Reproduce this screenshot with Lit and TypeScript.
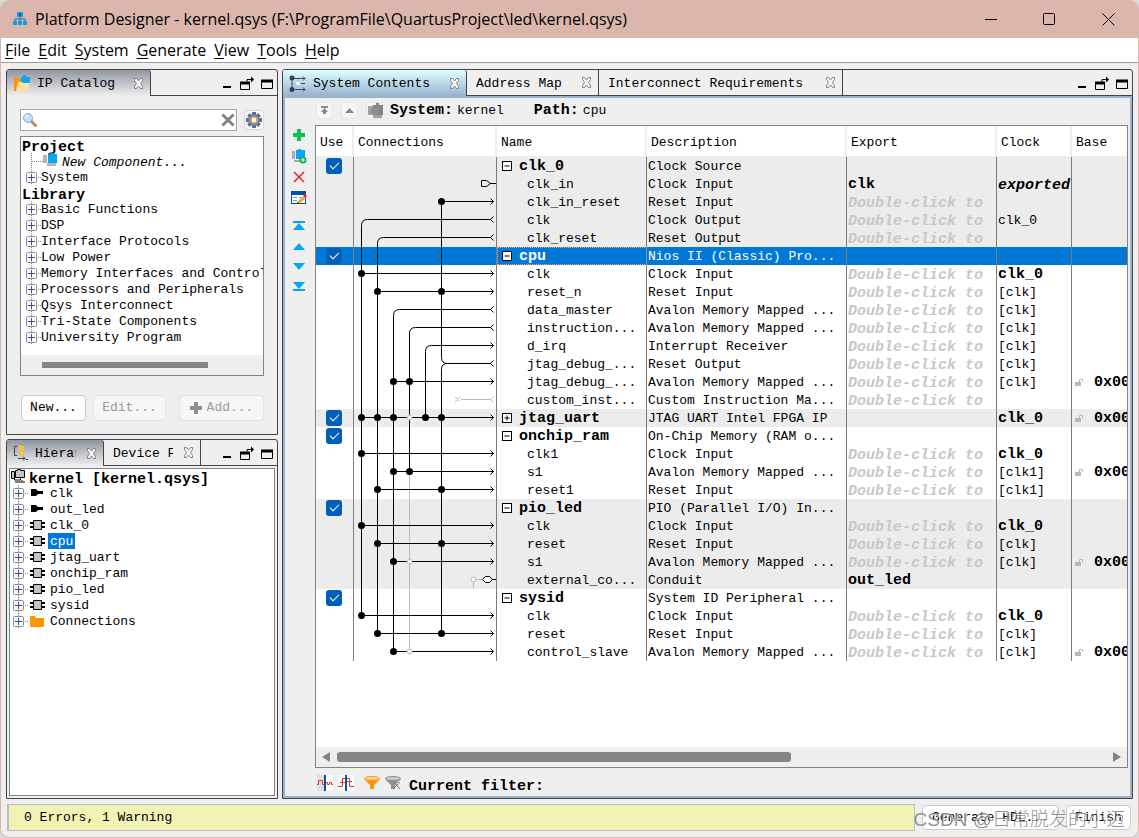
import { LitElement, html, svg, css, nothing, TemplateResult } from "lit";
import { customElement, state } from "lit/decorators.js";
import { classMap } from "lit/directives/class-map.js";

interface Row {
  name: string;
  desc: string;
  group?: "open" | "closed";
  exp?: string;
  clock?: string;
  clockStyle?: "bold" | "exported";
  base?: boolean;
  band?: boolean;
}

const HINT = "Double-click to";

const ROWS: Row[] = [
  { name: "clk_0", desc: "Clock Source", group: "open", band: true },
  { name: "clk_in", desc: "Clock Input", exp: "clk", clock: "exported", clockStyle: "exported", band: true },
  { name: "clk_in_reset", desc: "Reset Input", exp: HINT, band: true },
  { name: "clk", desc: "Clock Output", exp: HINT, clock: "clk_0", band: true },
  { name: "clk_reset", desc: "Reset Output", exp: HINT, band: true },
  { name: "cpu", desc: "Nios II (Classic) Pro...", group: "open" },
  { name: "clk", desc: "Clock Input", exp: HINT, clock: "clk_0", clockStyle: "bold" },
  { name: "reset_n", desc: "Reset Input", exp: HINT, clock: "[clk]" },
  { name: "data_master", desc: "Avalon Memory Mapped ...", exp: HINT, clock: "[clk]" },
  { name: "instruction...", desc: "Avalon Memory Mapped ...", exp: HINT, clock: "[clk]" },
  { name: "d_irq", desc: "Interrupt Receiver", exp: HINT, clock: "[clk]" },
  { name: "jtag_debug_...", desc: "Reset Output", exp: HINT, clock: "[clk]" },
  { name: "jtag_debug_...", desc: "Avalon Memory Mapped ...", exp: HINT, clock: "[clk]", base: true },
  { name: "custom_inst...", desc: "Custom Instruction Ma...", exp: HINT },
  { name: "jtag_uart", desc: "JTAG UART Intel FPGA IP", group: "closed", clock: "clk_0", clockStyle: "bold", base: true, band: true },
  { name: "onchip_ram", desc: "On-Chip Memory (RAM o...", group: "open" },
  { name: "clk1", desc: "Clock Input", exp: HINT, clock: "clk_0", clockStyle: "bold" },
  { name: "s1", desc: "Avalon Memory Mapped ...", exp: HINT, clock: "[clk1]", base: true },
  { name: "reset1", desc: "Reset Input", exp: HINT, clock: "[clk1]" },
  { name: "pio_led", desc: "PIO (Parallel I/O) In...", group: "open", band: true },
  { name: "clk", desc: "Clock Input", exp: HINT, clock: "clk_0", clockStyle: "bold", band: true },
  { name: "reset", desc: "Reset Input", exp: HINT, clock: "[clk]", band: true },
  { name: "s1", desc: "Avalon Memory Mapped ...", exp: HINT, clock: "[clk]", base: true, band: true },
  { name: "external_co...", desc: "Conduit", exp: "out_led", band: true },
  { name: "sysid", desc: "System ID Peripheral ...", group: "open" },
  { name: "clk", desc: "Clock Input", exp: HINT, clock: "clk_0", clockStyle: "bold" },
  { name: "reset", desc: "Reset Input", exp: HINT, clock: "[clk]" },
  { name: "control_slave", desc: "Avalon Memory Mapped ...", exp: HINT, clock: "[clk]", base: true },
];

const ROW_H = 18;
const track = (n: number) => 7.5 + 16 * n;
const mid = (r: number) => r * ROW_H + 8.5;

/* sources leave a bend on their track, then run down to the last sink */
const BENDS: [row: number, track: number, last: number, out: boolean][] = [
  [3, 0, 25, true],
  [4, 1, 26, true],
  [8, 2, 27, true],
  [9, 3, 17, true],
  [10, 4, 14, false],
  [11, 5, 26, true],
];

const SINKS: [row: number, dots: number[], open?: number][] = [
  [2, [5]],
  [6, [0]],
  [7, [1, 5]],
  [12, [2, 3]],
  [14, [0, 1, 2, 4, 5], 3],
  [16, [0]],
  [17, [2, 3]],
  [18, [1, 5]],
  [20, [0]],
  [21, [1, 5]],
  [22, [2], 3],
  [25, [0]],
  [26, [1, 5]],
  [27, [2], 3],
];

const icon = (w: number, h: number, body: TemplateResult) =>
  html`<svg width=${w} height=${h} viewBox="0 0 ${w} ${h}" aria-hidden="true">${body}</svg>`;

const closeIcon = icon(11, 11, svg`<path d="M1.500.5h2l2 2.500 2-2.500h2v2L7.500 5.500l2 3v2h-2l-2-2.500-2 2.500h-2v-2l2-3-2-3z" fill="#f6f6f6" stroke="#808080" stroke-width="1"/>`);
const catalogIcon = icon(18, 17, svg`<path d="M1 3h6l1 2v11H1z" fill="#ff9500"/><path d="M8 2h2V0h3v2h4v8H8z" fill="#0aa5f5"/><path d="M3 16l2-9h4l1 1h7l-2 8z" fill="#ffe2a0"/>`);
const systemIcon = icon(18, 17, svg`<path d="M3 3v12M3 3.500h13M6 14.500h10M10 8.500h6" stroke="#33465c" fill="none"/><path d="M14 1.500l2 2-2 2M14 12.500l2 2-2 2" stroke="#33465c" fill="none"/><circle cx="3" cy="3" r="2.500" fill="#2d4259"/><circle cx="3" cy="14.500" r="2.500" fill="#2d4259"/><path d="M9 4v9M5 8.500h4" stroke="#8fa9c4"/><circle cx="9" cy="8.500" r="2.500" fill="#fff" stroke="#b5c8dc"/>`);
const hierIcon = icon(16, 16, svg`<path d="M4 1.500H1.500v9H4" stroke="#33465c" fill="none"/><path d="M6 0h2l1 1h2v4H6zM6 6h2l1 1h2v4H6z" fill="#f7c531"/><path d="M5 13.500h7M10 11.500l2 2-2 2M13 14.500h2" stroke="#33465c" fill="none"/>`);
const chips = (dark: string, c1: string, c2: string) =>
  icon(15, 14, svg`<path d="M0 2h4v8H0zM4 10h9v3H4z" fill=${c1}/><path d="M5 1h2V0h3v1h4v9H5z" fill=${c2}/><path d="M5 1h2V0" stroke=${dark} fill="none"/>`);
const drillIcon = icon(17, 16, svg`<path d="M1 3h5v9H1zM6 12h9v3H6z" fill="#a2a2a2"/><path d="M6 2h3V0h3v2h4v10H6z" fill="#858585"/><circle cx="8" cy="8" r="4" fill="#8e8e8e"/>`);
const kernelIcon = icon(15, 14, svg`<path d="M.5 2.500h3v7h-3zM4.500 1.500h2v-1h3v1h4v7h-9z" fill="#c4c4c4" stroke="#000"/><path d="M3.500 9v2h6V9M4 13h10M11 11v1.500" stroke="#000" fill="none"/>`);
const plugIcon = icon(15, 10, svg`<path d="M1 1h5l2 2h5v3H8L6 8H1z" fill="#000"/>`);
const chipIcon = icon(15, 10, svg`<path d="M0 3h15M0 7h15" stroke="#000" stroke-width="2"/><path d="M3.500.5h8v9h-8z" fill="#c4c4c4" stroke="#000"/>`);
const folderIcon = icon(15, 12, svg`<path d="M0 1h5l1 2h8v9H0z" fill="#ff9500"/>`);
const plusBox = html`<svg class="pm" width="11" height="11" viewBox="0 0 11 11" aria-hidden="true"><rect x=".5" y=".5" width="10" height="10" rx="1" fill="#f7f7f7" stroke="#8f8f8f"/><path d="M2 5.500h7M5.500 2v7" stroke="#3b4f91"/></svg>`;
const lockIcon = icon(9, 9, svg`<path d="M0 4h6v4H0z" fill="#b9b9b9"/><path d="M4.500 4V1.500h3V4" stroke="#b9b9b9" fill="none"/>`);

const minIcon = icon(16, 16, svg`<path d="M4 11h8" stroke="#000" stroke-width="2"/>`);
const restoreIcon = icon(16, 16, svg`<path d="M1 7h10" stroke="#000" stroke-width="3"/><path d="M1.500 6v7.500h9V7" fill="none" stroke="#000"/><path d="M8 5.500V3.500h5" fill="none" stroke="#000"/><path d="M12 .5l3 3-3 3z"/>`);
const maxIcon = icon(16, 16, svg`<path d="M2 5h12" stroke="#000" stroke-width="3"/><path d="M2.500 5v7.500h11V5" fill="none" stroke="#000"/>`);

@customElement("app-root")
export class AppRoot extends LitElement {
  @state() private selected = 5;

  static styles = css`
    :host {
      display: block;
      height: 100vh;
      background: #dcdad8;
      font: 13px/16px "Liberation Mono", "Noto Sans CJK SC", monospace;
      color: #000;
    }
    * { box-sizing: border-box; }
    svg { display: block; flex: none; }
    button { font: inherit; color: inherit; background: none; border: 0; padding: 0; margin: 0; }
    ul { list-style: none; margin: 0; padding: 0; }
    .window {
      position: relative;
      height: 100%;
      display: flex;
      flex-direction: column;
      background: #efefef;
      border: 1px solid #dbb6ac;
      border-top: 0;
      border-radius: 9px;
      overflow: hidden;
    }
    .title {
      display: flex;
      align-items: center;
      flex: none;
      height: 38px;
      background: #dbb6ac;
      padding-left: 12px;
      font: 16px/22px "Open Sans", "Noto Sans", sans-serif;
    }
    .title h1 { font: inherit; margin: 0; padding-left: 8px; flex: 1; white-space: nowrap; overflow: hidden; }
    .title button { width: 58px; height: 38px; display: grid; place-items: center; }
    .title button:last-child { width: 60px; }
    .menu {
      display: flex;
      gap: 8px;
      flex: none;
      height: 25px;
      padding-left: 4px;
      background: #fff;
      border-bottom: 1px solid #a0a0a0;
      font: 16px/24px "Open Sans", "Noto Sans", sans-serif;
    }
    .menu u { text-underline-offset: 2px; }
    .body {
      flex: 1;
      min-height: 0;
      display: grid;
      grid-template-columns: 272px minmax(0, 1fr);
      grid-template-rows: minmax(0, 366fr) minmax(0, 360fr);
      gap: 4px;
      padding: 6px 5px 5px;
    }
    .panel {
      display: flex;
      flex-direction: column;
      min-height: 0;
      border: 1px solid #444;
      border-radius: 3px 3px 0 0;
      overflow: hidden;
    }
    .main { grid-column: 2; grid-row: 1 / 3; }
    .strip { display: flex; flex: none; height: 26px; }
    .tab {
      display: flex;
      align-items: center;
      justify-content: space-between;
      gap: 6px;
      border-right: 1px solid #444;
      border-bottom: 1px solid #444;
      padding: 0 6px 0 9px;
      white-space: nowrap;
    }
    .tab .label { flex: 1; margin-right: 4px; padding-top: 2px; text-align: left; overflow: hidden; }
    .tab.on { border-bottom: 0; padding-left: 6px; border-top-right-radius: 3px; background: linear-gradient(#9095a0, #efefef); }
    .main .tab.on { background: linear-gradient(#dcffff, #9ab3cf); }
    .w-cat { width: 144px; }
    .w-hier { width: 97px; }
    .w-dev { width: 97px; }
    .w-sys { width: 184px; }
    .w-addr { width: 132px; }
    .w-req { width: 244px; }
    .tools {
      flex: 1;
      display: flex;
      justify-content: flex-end;
      align-items: center;
      gap: 4px;
      padding: 3px 2px 0 0;
      border-bottom: 1px solid #444;
    }
    .catalog { flex: 1; min-height: 0; display: flex; flex-direction: column; padding: 13px 13px; }
    .search { display: flex; align-items: center; gap: 7px; }
    .field {
      flex: 1;
      display: flex;
      align-items: center;
      height: 22px;
      padding: 0 1px;
      background: #fff;
      border: 1px solid #a3a3a3;
    }
    .field input { flex: 1; min-width: 0; border: 0; outline: 0; background: none; font: inherit; }
    .soft { display: grid; place-items: center; background: #f9f9f9; border: 1px solid #d9d9d9; border-radius: 3px; width: 17px; height: 17px; }
    .search .soft { width: 20px; height: 20px; }
    .treebox {
      flex: 1;
      min-height: 0;
      display: flex;
      flex-direction: column;
      margin: 5px 0 19px;
      background: #fff;
      border: 1px solid #7f838c;
      overflow: hidden;
    }
    .tree { flex: 1; }
    .tree li { display: flex; align-items: center; height: 16px; white-space: nowrap; padding-left: 5px; background-repeat: no-repeat; }
    .tree .pm { margin-right: 1px; }
    .tree li.twig, .tree li.newc {
      background-image:
        repeating-linear-gradient(90deg, #888 0 1px, transparent 1px 2px),
        repeating-linear-gradient(#888 0 1px, transparent 1px 2px);
      background-position: 17px 8px, 10px 0;
      background-size: 4px 1px, 1px 16px;
    }
    .tree li.newc { background-position: 11px 8px, 10px 0; background-size: 11px 1px, 1px 16px; }
    .tree li.twig .pm + * { margin-left: 3px; }
    .tree li .t { height: 16px; padding-top: 1px; }
    .tree li.head { font-size: 15px; font-weight: bold; padding: 6px 0 0 1px; }
    .tree li.newc { font-style: italic; padding: 3px 0 0 22px; gap: 4px; }
    .tree li.newc svg { margin-top: -6px; }
    .hbar { height: 20px; flex: none; background: #efefef; padding: 7px 55px 0 21px; }
    .hbar i { display: block; height: 6px; background: #848484; }
    .actions { display: flex; justify-content: space-between; padding-left: 1px; }
    .btn {
      height: 26px;
      padding: 0 7px;
      background: #fdfdfd;
      border: 1px solid #ccc;
      border-radius: 4px;
      display: flex;
      align-items: center;
      justify-content: center;
      gap: 5px;
      flex: none;
    }
    .btn:disabled { color: #9a9a9a; background: #f6f6f6; border-color: #e3e3e3; }
    .b-new { width: 65px; margin-right: 7px; }
    .b-edit { width: 73px; margin-right: auto; }
    .b-add { width: 85px; }
    .hier { flex: 1; margin: 2px; padding-left: 3px; background: #fff; border: 1px solid #7f838c; overflow: hidden; }
    .hier .tree li { padding-left: 0; }
    .hier .tree li.twig { background-position: 12px 8px, 5px 0; }
    .hier .tree li.head { padding-left: 0; gap: 3px; }
    .hier .tree li.head svg { margin: -9px 0 0 -2px; }
    .hier .tree li.twig svg:not(.pm) { margin-left: 5px; }
    .hier .tree li .t { margin-left: 3px; padding: 1px 2px 0; }
    .hier .tree li .picked { background: #0078d7; color: #fff; }
    .content {
      flex: 1;
      min-height: 0;
      display: grid;
      grid-template: 27px minmax(0, 1fr) 28px / 30px minmax(0, 1fr);
      border: 2px solid #9ab3cf;
      padding-right: 2px;
    }
    .path { grid-column: 2; display: flex; align-items: center; padding: 0 0 2px 1px; white-space: nowrap; }
    .path .soft { margin-right: 8px; background: #f6f6f6; border-color: #e6e6e6; }
    .path .soft:nth-of-type(3) { margin-right: 7px; }
    .path b { font-size: 15px; margin-right: 4px; }
    .path .gap { margin-right: 30px; }
    .side { display: flex; flex-direction: column; align-items: center; gap: 5px; padding: 2px 2px 0 0; }
    .side button { width: 16px; height: 16px; display: grid; place-items: center; }
    .side .moves { display: flex; flex-direction: column; gap: 4px; margin-top: 7px; }
    .grid { background: #fff; border: 1px solid #7f838c; display: flex; flex-direction: column; overflow: hidden; }
    .scroller { flex: 1; min-height: 0; overflow: hidden; }
    table { width: 100%; table-layout: fixed; border-collapse: separate; border-spacing: 0; }
    th { height: 31px; padding: 3px 0 0 4px; text-align: left; font-weight: normal; border-right: 2px solid #eee; border-bottom: 1px solid #eee; }
    th:last-child { border-right: 0; }
    td { height: 18px; padding: 2px 0 0 1px; line-height: 16px; border-right: 1px solid #7a7a7a; white-space: nowrap; overflow: hidden; }
    td:first-child { padding: 0 0 0 10px; border-color: #808080; }
    td:last-child { border-right: 0; }
    .band td { background: #ececec; }
    .sel td { background: #0078d7; color: #fff; }
    .sel td.name { outline: 1px dotted #f0a060; outline-offset: -1px; }
    tr td.wires { padding: 0; vertical-align: top; background: none; }
    td.name { padding-left: 30px; }
    td.name.group { padding: 0 0 0 5px; font-size: 15px; font-weight: bold; }
    .line { display: flex; align-items: center; height: 18px; }
    .line svg { margin-right: 7px; }
    .line .txt { padding-top: 2px; }
    td.strong { font-size: 15px; font-weight: bold; }
    td.hint { font-size: 15px; font-weight: bold; font-style: italic; color: #c8c8c8; padding-top: 4px; line-height: 14px; }
    td.hint.dark { color: #000; }
    td.base { padding-top: 0; }
    td.base .line { font-size: 15px; font-weight: bold; padding-left: 2px; }
    td.base .line svg { margin-right: 10px; }
    input.use {
      appearance: none;
      display: block;
      position: relative;
      width: 16px;
      height: 16px;
      margin: 0;
      border-radius: 3px;
      background: #005fb8;
    }
    input.use:checked::after {
      content: "";
      position: absolute;
      left: 4px;
      top: 4px;
      width: 8px;
      height: 4px;
      border: solid #fff;
      border-width: 0 0 1px 1px;
      transform: rotate(-45deg);
    }
    .bar { flex: none; height: 20px; display: flex; align-items: center; gap: 7px; padding: 0 6px; background: #efefef; }
    .bar .rail { flex: 1; }
    .bar .thumb { width: 59%; height: 10px; border-radius: 3px; background: #848484; }
    .filter { grid-column: 2; display: flex; align-items: center; gap: 5px; padding: 2px 0 0 2px; }
    .filter b { font-size: 15px; padding: 7px 0 0 3px; }
    .filter button:nth-of-type(3) { margin-left: 5px; }
    .status { flex: none; display: flex; gap: 7px; align-items: center; padding: 0 7px 6px 6px; }
    .msg { flex: 1; height: 27px; padding: 5px 15px; background: #f3f2b5; border: 1px solid #bdbdbd; border-left-width: 2px; }
    .status .btn { border-radius: 4px; height: 25px; }
    .b-gen { width: 137px; }
    .b-fin { width: 65px; }
    .mark {
      position: absolute;
      right: 13px;
      bottom: 5px;
      font: 300 19px/24px "Liberation Sans", "Noto Sans CJK SC", sans-serif;
      color: rgba(110, 110, 110, 0.75);
      text-shadow: 1px 1px 1px #fff;
      white-space: nowrap;
      pointer-events: none;
    }
  `;

  private tools() {
    return html`<div class="tools">
      <button aria-label="Minimize panel">${minIcon}</button>
      <button aria-label="Detach panel">${restoreIcon}</button>
      <button aria-label="Maximize panel">${maxIcon}</button>
    </div>`;
  }

  private tab(label: string, width: string, glyph?: TemplateResult) {
    return html`<button class=${classMap({ tab: true, on: !!glyph, [width]: true })}>
      ${glyph ?? nothing}<span class="label">${label}</span>${closeIcon}
    </button>`;
  }

  private twig(label: string, glyph?: TemplateResult, picked = false) {
    return html`<li class="twig">${plusBox}${glyph ?? nothing}<span class=${classMap({ t: true, picked })}>${label}</span></li>`;
  }

  private wires() {
    const y = mid;
    const inTip = (r: number) => `M136.500 ${y(r) - 3}l3 3l-3 3`;
    const outTip = (r: number) => `M139.500 ${y(r) - 3}l-3 3l3 3`;
    const ring = (x: number, r: number) => svg`<circle cx=${x} cy=${y(r)} r="2.500" fill="#f4f4f4" stroke="#bbb"/>`;
    return html`<svg width="142" height=${ROWS.length * ROW_H} aria-label="Connections">
      ${ROWS.map((row, i) =>
        i === this.selected || row.band
          ? svg`<rect x="0" y=${i * ROW_H} width="142" height=${ROW_H} fill=${i === this.selected ? "#0078d7" : "#ececec"}/>`
          : nothing)}
      <g fill="none" stroke="#bbb">
        <path d="M${track(3)} ${y(17)}V${y(27)}"/>
        <path d="M101 ${y(13) - 2.5}l5 5m0-5l-5 5M107 ${y(13)}h30${outTip(13)}"/>
        <path d="M119.500 ${y(23)}v9M122 ${y(23)}h6"/>
      </g>
      <g fill="none" stroke="#000">
        ${BENDS.map(([r, t, last, out]) => svg`<path d="M${track(t)} ${y(last)}V${y(r) + 6}q0-6 6-6H${out ? 137 : 139.5}${out ? outTip(r) : inTip(r)}"/>`)}
        <path d="M${track(5)} ${y(2)}V${y(11) - 6}q0 6 6 6"/>
        ${SINKS.map(([r, dots]) => svg`<path d="M${track(dots[0])} ${y(r)}H139.500${inTip(r)}"/>`)}
        <path d="M127.500 ${y(1) - 3}h5l4 3l-4 3h-5zM136 ${y(1)}h7" />
        <path d="M128.500 ${y(23)}l3-3h4l3 3l-3 3h-4zM138 ${y(23)}h5" fill="#fff"/>
      </g>
      ${ring(119.5, 23)}
      ${SINKS.map(([r, dots, open]) => svg`${dots.map((d) => svg`<circle cx=${track(d)} cy=${y(r)} r="3.500"/>`)}${open === undefined ? nothing : ring(track(open), r)}`)}
    </svg>`;
  }

  private row(r: Row, i: number) {
    const hint = r.exp === HINT;
    const exported = r.clockStyle === "exported";
    return html`<tr class=${classMap({ band: !!r.band, sel: i === this.selected })} @click=${() => (this.selected = i)}>
      <td>${r.group ? html`<input class="use" type="checkbox" checked aria-label="Use ${r.name}" />` : nothing}</td>
      ${i === 0 ? html`<td class="wires" rowspan=${ROWS.length}>${this.wires()}</td>` : nothing}
      <td class=${classMap({ name: true, group: !!r.group })}>
        ${r.group
          ? html`<div class="line">${icon(10, 10, svg`<rect x=".5" y=".5" width="9" height="9" fill="#fff" stroke="#000"/><path d=${r.group === "open" ? "M2.500 5h5" : "M2.500 5h5M5 2.500v5"} stroke="#000"/>`)}<span class="txt">${r.name}</span></div>`
          : r.name}
      </td>
      <td>${r.desc}</td>
      <td class=${classMap({ hint, strong: !!r.exp && !hint })}>${r.exp ?? ""}</td>
      <td class=${classMap({ hint: exported, dark: exported, strong: r.clockStyle === "bold" })}>${r.clock ?? ""}</td>
      <td class="base">${r.base ? html`<div class="line">${lockIcon}<span class="txt">0x0000_0000</span></div>` : nothing}</td>
    </tr>`;
  }

  render() {
    const blue = "#0aa5f5";
    return html`<div class="window">
      <header class="title">
        ${icon(14, 14, svg`<path d="M4 0h6v5H4zM0 9h4v4H0zM5 9h4v4H5zM10 9h4v4h-4z" fill="#0aa0f0"/><path d="M7 5v4M2 9V7h10v2" stroke="#1b6fae" fill="none"/><path d="M6 1h2v3H6z" fill="#175d92"/>`)}
        <h1>Platform Designer - kernel.qsys (F:\\ProgramFile\\QuartusProject\\led\\kernel.qsys)</h1>
        <button aria-label="Minimize">${icon(13, 13, svg`<path d="M0 6.500h12" stroke="#000"/>`)}</button>
        <button aria-label="Maximize">${icon(13, 13, svg`<rect x=".5" y=".5" width="11" height="11" rx="1" fill="none" stroke="#000"/>`)}</button>
        <button aria-label="Close">${icon(13, 13, svg`<path d="M.5.5l12 12M12.500.5l-12 12" stroke="#000"/>`)}</button>
      </header>
      <nav class="menu">
        ${["File", "Edit", "System", "Generate", "View", "Tools", "Help"].map((m) => html`<button><u>${m[0]}</u>${m.slice(1)}</button>`)}
      </nav>
      <main class="body">
        <section class="panel">
          <div class="strip">${this.tab("IP Catalog", "w-cat", catalogIcon)}${this.tools()}</div>
          <div class="catalog">
            <div class="search">
              <label class="field">
                ${icon(16, 16, svg`<path d="M9 9l4.500 4.500" stroke="#b98a5a" stroke-width="3" stroke-linecap="round"/><circle cx="6" cy="6" r="4.500" fill="#bfe0fb" stroke="#8fa8c8"/><path d="M3.500 6a2.500 2.500 0 0 1 2.500-2.500" stroke="#fff" fill="none"/>`)}
                <input type="text" aria-label="Search catalog" />
                ${icon(14, 14, svg`<path d="M2.500 2.500l9 9M11.500 2.500l-9 9" stroke="#858585" stroke-width="3" stroke-linecap="square"/>`)}
              </label>
              <button class="soft" aria-label="Options">
                ${icon(16, 16, svg`<g stroke="#566f92" stroke-width="4"><path d="M8 0v16M0 8h16M2.500 2.500l11 11M13.500 2.500l-11 11"/></g><circle cx="8" cy="8" r="5.500" fill="#6b86ad"/><circle cx="8" cy="8" r="3" fill="#fff" stroke="#f0a030" stroke-width="1.500"/>`)}
              </button>
            </div>
            <div class="treebox">
              <ul class="tree">
                <li class="head">Project</li>
                <li class="newc">${chips("#223", "#b5b5b5", blue)}New Component...</li>
                ${this.twig("System")}
                <li class="head">Library</li>
                ${["Basic Functions", "DSP", "Interface Protocols", "Low Power", "Memory Interfaces and Controllers", "Processors and Peripherals", "Qsys Interconnect", "Tri-State Components", "University Program"].map((t) => this.twig(t))}
              </ul>
              <div class="hbar"><i></i></div>
            </div>
            <div class="actions">
              <button class="btn b-new">New...</button>
              <button class="btn b-edit" disabled>Edit...</button>
              <button class="btn b-add" disabled>${icon(12, 12, svg`<path d="M6 0v12M0 6h12" stroke="#8f8f8f" stroke-width="4"/>`)}Add...</button>
            </div>
          </div>
        </section>

        <section class="panel">
          <div class="strip">${this.tab("Hierarchy", "w-hier", hierIcon)}${this.tab("Device Family", "w-dev")}${this.tools()}</div>
          <div class="hier">
            <ul class="tree">
              <li class="head">${kernelIcon}kernel [kernel.qsys]</li>
              ${this.twig("clk", plugIcon)}${this.twig("out_led", plugIcon)}
              ${["clk_0", "cpu", "jtag_uart", "onchip_ram", "pio_led", "sysid"].map((t) => this.twig(t, chipIcon, t === "cpu"))}
              ${this.twig("Connections", folderIcon)}
            </ul>
          </div>
        </section>

        <section class="panel main">
          <div class="strip">
            ${this.tab("System Contents", "w-sys", systemIcon)}${this.tab("Address Map", "w-addr")}${this.tab("Interconnect Requirements", "w-req")}${this.tools()}
          </div>
          <div class="content">
            <div class="path">
              <button class="soft" aria-label="Top">${icon(9, 9, svg`<path d="M1 1h7M3 7h3" stroke="#888" stroke-width="2"/><path d="M4.500 2L8 6H1z" fill="#888"/>`)}</button>
              <button class="soft" aria-label="Up">${icon(9, 9, svg`<path d="M4.500 2L9 7H0z" fill="#888"/>`)}</button>
              <button class="soft" aria-label="Drill in">${drillIcon}</button>
              <b>System:</b><span class="gap">kernel</span><b>Path:</b><span>cpu</span>
            </div>
            <div class="side">
              <button aria-label="Add">${icon(12, 12, svg`<path d="M6 0v12M0 6h12" stroke="#0cc24f" stroke-width="4"/>`)}</button>
              <button aria-label="Add component">${icon(16, 16, svg`<path d="M1 3h3v8H1zM3 12h7v2H3z" fill="#aaa"/><path d="M5 2h2V1h3v1h4v9H5z" fill=${blue}/><circle cx="12" cy="12" r="3.500" fill="#0cb24f"/><path d="M10 12h4M12 10v4" stroke="#fff"/>`)}</button>
              <button aria-label="Remove">${icon(12, 12, svg`<path d="M1 1l10 10M11 1L1 11" stroke="#e8222e" stroke-width="1.500"/>`)}</button>
              <button aria-label="Edit">${icon(16, 14, svg`<rect x=".5" y=".5" width="14" height="12" fill="#fff" stroke="#0b4ea2"/><path d="M0 0h15v4H0z" fill="#0b4ea2"/><path d="M2 6.500h4M2 9.500h4M8 6.500h3" stroke="#2ab0ee"/><path d="M6 13l1-3 6-5 2 2-6 5z" fill="#f5a31a"/><path d="M12 5l2-2 2 2-1.500 2z" fill="#e8222e"/><path d="M6 13l.5-2 1.500 1.500z"/>`)}</button>
              <div class="moves">
                <button aria-label="Move to top">${icon(12, 10, svg`<path d="M0 0h12v2H0zM6 2l6 7H0z" fill=${blue}/>`)}</button>
                <button aria-label="Move up">${icon(12, 7, svg`<path d="M6 0l6 7H0z" fill=${blue}/>`)}</button>
                <button aria-label="Move down">${icon(12, 7, svg`<path d="M6 7l6-7H0z" fill=${blue}/>`)}</button>
                <button aria-label="Move to bottom">${icon(12, 10, svg`<path d="M0 8h12v2H0zM6 8l6-7H0z" fill=${blue}/>`)}</button>
              </div>
            </div>
            <div class="grid">
              <div class="scroller">
                <table>
                  <colgroup>
                    <col width="38" /><col width="143" /><col width="150" /><col width="200" /><col width="150" /><col width="75" /><col />
                  </colgroup>
                  <thead>
                    <tr>${["Use", "Connections", "Name", "Description", "Export", "Clock", "Base"].map((h) => html`<th>${h}</th>`)}</tr>
                  </thead>
                  <tbody>${ROWS.map((r, i) => this.row(r, i))}</tbody>
                </table>
              </div>
              <div class="bar">
                ${icon(8, 10, svg`<path d="M8 0v10L0 5z" fill="#848484"/>`)}
                <div class="rail"><div class="thumb"></div></div>
                ${icon(8, 10, svg`<path d="M0 0v10l8-5z" fill="#848484"/>`)}
              </div>
            </div>
            <div class="filter">
              <button aria-label="Clock domains">${icon(16, 16, svg`<path d="M0 0h8v16H0z" fill="#dededb"/><path d="M8 0h8v16H8z" fill="#fff"/><path d="M0 9.500h1.500v-4h4v4h1.500M9 7.500h1.500v2h2v-2h2v2h2" stroke="#f0342c" fill="none"/><path d="M8 0v16" stroke="#0b4ea2" stroke-width="2"/>`)}</button>
              <button aria-label="Reset domains">${icon(16, 16, svg`<path d="M0 0h16v16H0z" fill="#fff"/><path d="M0 11.500h4.500v-8h7v8h4.500M2 7.500h5M9 6.500h5" stroke="#f0342c" fill="none"/><path d="M8 0v16" stroke="#0b4ea2" stroke-width="2"/>`)}</button>
              <button aria-label="Filter">${icon(16, 14, svg`<path d="M0 3l6 6v4h4V9l6-6z" fill="#ff9500"/><ellipse cx="8" cy="2.500" rx="7.500" ry="2" fill="#ffd9a0" stroke="#ff9500"/>`)}</button>
              <button aria-label="Clear filter">${icon(16, 14, svg`<path d="M0 3l6 6v4h4V9l6-6z" fill="#909090"/><ellipse cx="8" cy="2.500" rx="7.500" ry="2" fill="#ccc" stroke="#909090"/><path d="M8 13l7-7M9 6l6 7" stroke="#777"/>`)}</button>
              <b>Current filter:</b>
            </div>
          </div>
        </section>
      </main>
      <footer class="status">
        <div class="msg">0 Errors, 1 Warning</div>
        <button class="btn b-gen">Generate HDL...</button>
        <button class="btn b-fin">Finish</button>
      </footer>
      <div class="mark">CSDN @日常脱发的小迈</div>
    </div>`;
  }
}
